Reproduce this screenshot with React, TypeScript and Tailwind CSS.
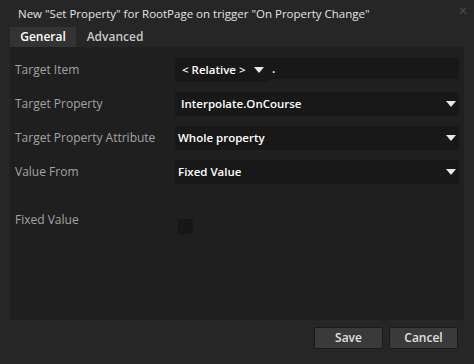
import React from 'react';

const Caret: React.FC = () => (
  <svg width="10" height="6" viewBox="0 0 10 6" className="shrink-0">
    <path d="M0 0h10L5 6z" fill="#e8e8e8" />
  </svg>
);

const Select: React.FC<{ value: string; pad?: string }> = ({ value, pad = 'pl-[3px]' }) => (
  <div className={`flex h-[24px] items-center justify-between bg-[#181818] ${pad} pr-[3px]`}>
    <span className="font-semibold text-[11.5px] text-white">{value}</span>
    <Caret />
  </div>
);

const Label: React.FC<{ children: React.ReactNode }> = ({ children }) => (
  <div className="w-[160px] text-[12px] text-[#a4a4a4]">{children}</div>
);

export default function App() {
  return (
    <div className="relative flex h-[364px] w-[474px] flex-col bg-[#262626]" style={{ fontFamily: '"Open Sans", "Liberation Sans", sans-serif' }}>
      <div className="flex h-[27px] items-center px-[18px] text-[11.5px] text-[#e4e4e4]">
        New "Set Property" for RootPage on trigger "On Property Change"
      </div>
      <div className="absolute right-[6px] top-[5px] text-[12px] leading-none text-[#4a4a4a]">✕</div>

      <div className="flex h-[20px] px-[10px]">
        <div className="flex w-[66px] items-center justify-center bg-[#333333] font-semibold text-[12px] text-white">General</div>
        <div className="flex w-[78px] items-center justify-center font-semibold text-[12px] text-[#c8c8c8]">Advanced</div>
      </div>

      <div className="mx-[10px] flex h-[273px] flex-col bg-[#1f1f1f] pl-[5px] pr-[5px] pt-[11px]">
        <div className="flex h-[24px] items-center">
          <Label>Target Item</Label>
          <div className="flex flex-1 items-start">
            <div className="flex h-[24px] w-[94px] items-center gap-[8px] bg-[#181818] pl-[7px]">
              <span className="font-semibold text-[11.5px] text-white">&lt; Relative &gt;</span>
              <Caret />
            </div>
            <div className="flex h-[21px] flex-1 items-center bg-[#181818] pl-[3px] font-semibold text-[12px] text-white">.</div>
          </div>
        </div>
        <div className="mt-[10px] flex items-center">
          <Label>Target Property</Label>
          <div className="flex-1"><Select value="Interpolate.OnCourse" pad="pl-[6px]" /></div>
        </div>
        <div className="mt-[10px] flex items-center">
          <Label>Target Property Attribute</Label>
          <div className="flex-1"><Select value="Whole property" /></div>
        </div>
        <div className="mt-[10px] flex items-center">
          <Label>Value From</Label>
          <div className="flex-1"><Select value="Fixed Value" /></div>
        </div>
        <div className="mt-[27px] flex items-start">
          <Label>Fixed Value</Label>
          <div className="ml-[3px] mt-[8px] h-[15px] w-[15px] bg-[#171717]" />
        </div>
      </div>

      <div className="mt-[7px] flex justify-end gap-[6px] pr-[16px]">
        <button className="h-[22px] w-[69px] rounded-[2px] border border-[#1a1a1a] bg-[#3a3a3a] font-semibold text-[12px] text-[#e0e0e0]">Save</button>
        <button className="h-[22px] w-[69px] rounded-[2px] border border-[#1a1a1a] bg-[#3a3a3a] font-semibold text-[12px] text-[#e0e0e0]">Cancel</button>
      </div>
    </div>
  );
}
